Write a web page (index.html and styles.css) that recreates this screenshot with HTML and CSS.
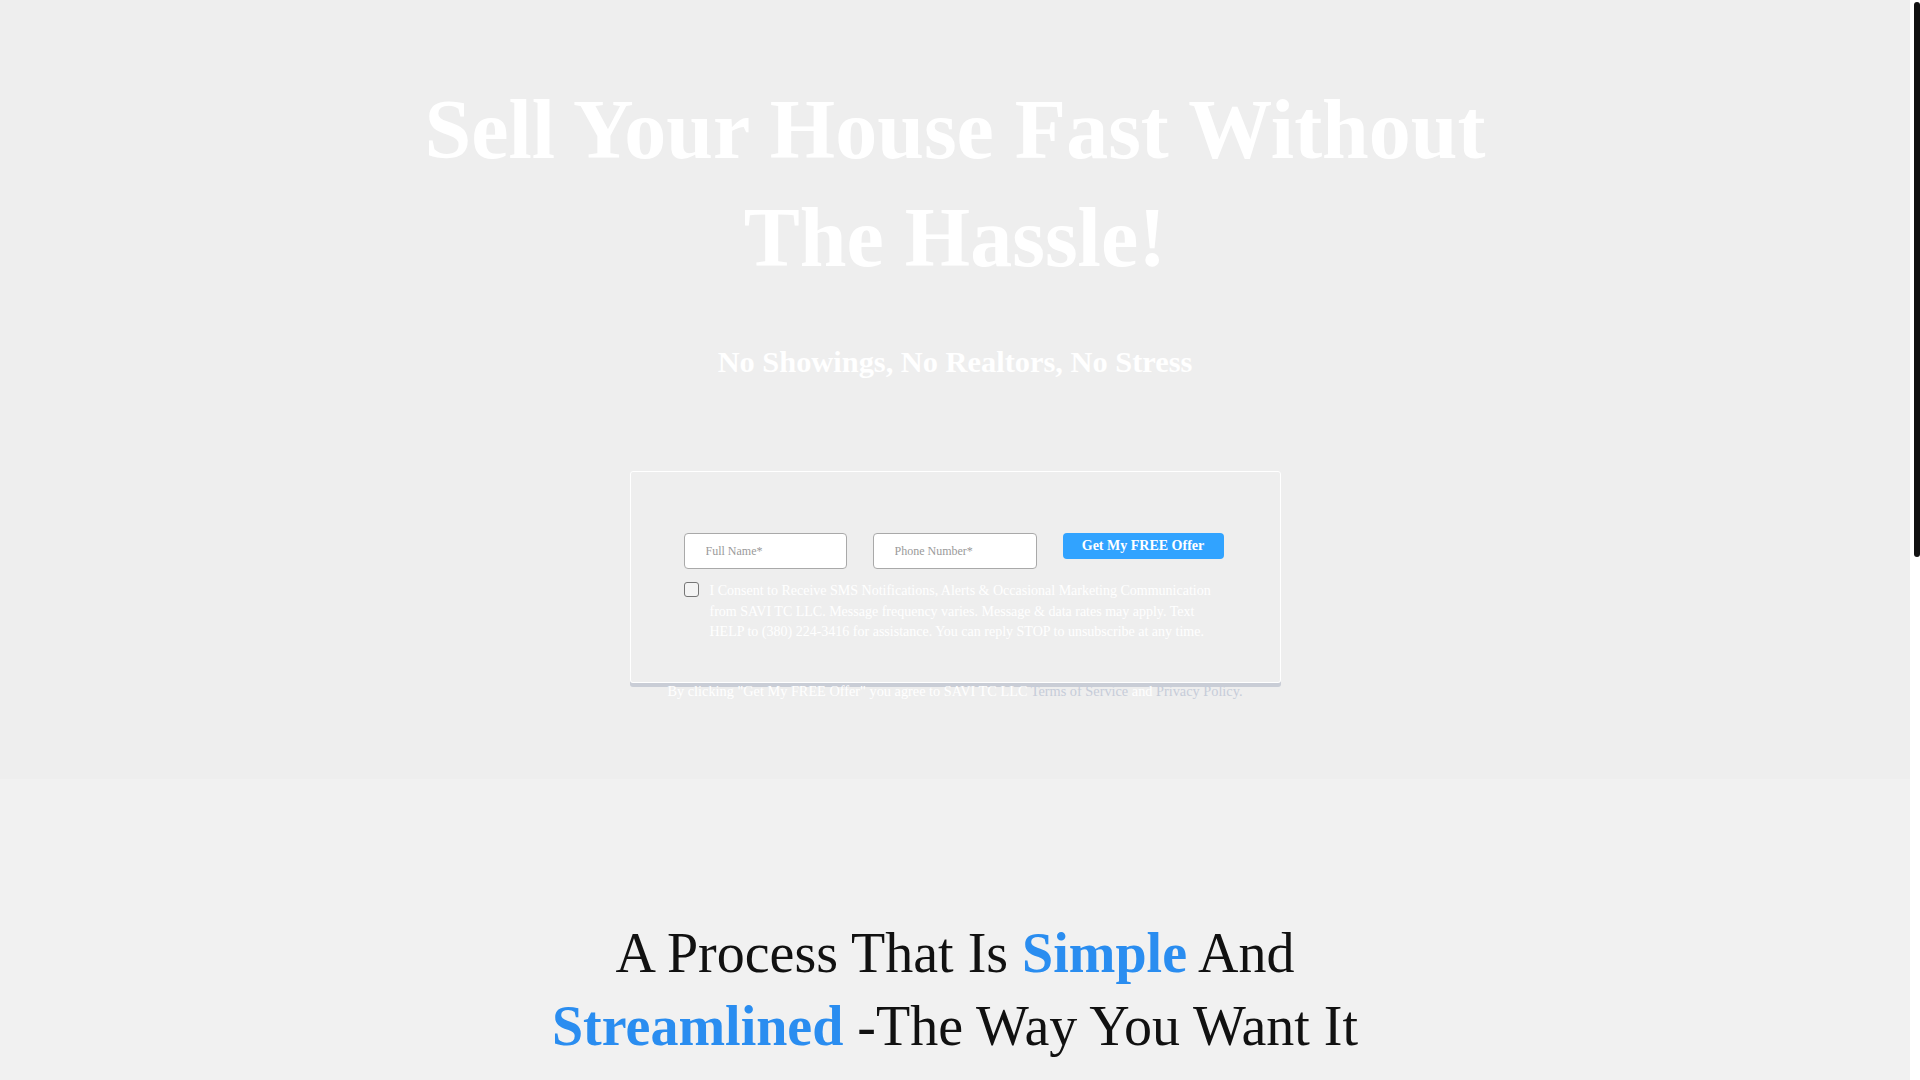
FILE: index.html
```html
<!DOCTYPE html>
<html lang="en">
<head>
<meta charset="utf-8">
<title>Sell Your House Fast</title>
<link rel="stylesheet" href="styles.css">
</head>
<body>
<section class="hero">
  <h1 class="hero-title">Sell Your House Fast Without The Hassle!</h1>
  <p class="hero-sub">No Showings, No Realtors, No Stress</p>
  <div class="form-wrap">
    <form class="lead-form">
      <div class="form-row">
        <input class="field field-name" type="text" placeholder="Full Name*">
        <input class="field field-phone" type="text" placeholder="Phone Number*">
        <button class="submit" type="button">Get My FREE Offer</button>
      </div>
      <label class="consent">
        <input class="consent-box" type="checkbox">
        <span class="consent-text">I Consent to Receive SMS Notifications, Alerts &amp; Occasional Marketing Communication from SAVI TC LLC. Message frequency varies. Message &amp; data rates may apply. Text HELP to (380) 224-3416 for assistance. You can reply STOP to unsubscribe at any time.</span>
      </label>
    </form>
    <p class="disclaimer">By clicking "Get My FREE Offer" you agree to SAVI TC LLC <a class="legal-link" href="#">Terms of Service</a> and <a class="legal-link" href="#">Privacy Policy.</a></p>
  </div>
</section>
<section class="process">
  <h2 class="process-title">A Process That Is <strong class="accent">Simple</strong> And <strong class="accent">Streamlined</strong> -The Way You Want It</h2>
</section>
<div class="scrollbar" aria-hidden="true"><div class="scrollbar-thumb"></div></div>
</body>
</html>
```
FILE: styles.css
```css
html {
  background: #ffffff;
}

body {
  margin: 0;
  padding-right: 10px;
  font-family: "Liberation Serif", "Times New Roman", serif;
  background: #f1f1f1;
}

.scrollbar {
  position: fixed;
  top: 0;
  right: 0;
  width: 10px;
  height: 100vh;
  background: #ffffff;
}

.scrollbar-thumb {
  margin: 2px 0 0 4px;
  width: 6px;
  height: 555px;
  border-radius: 3px;
  background: #111111;
}

.hero {
  background: #eeeeee;
  height: 779px;
  box-sizing: border-box;
  padding-top: 76px;
  text-align: center;
}

.hero-title {
  margin: 0 auto;
  max-width: 1120px;
  font-size: 84px;
  line-height: 108px;
  font-weight: bold;
  color: #ffffff;
}

.hero-sub {
  margin: 51px 0 0;
  font-size: 30.4px;
  line-height: 39px;
  font-weight: bold;
  color: #ffffff;
}

.form-wrap {
  width: 651px;
  margin: 89px auto 0;
}

.lead-form {
  height: 212px;
  box-sizing: border-box;
  border: 1px solid #ffffff;
  border-radius: 3px;
  box-shadow: 0 4px 0 #c9cdd6;
  padding: 61px 53px 0 53px;
  text-align: left;
}

.form-row {
  display: flex;
  align-items: flex-start;
  gap: 26px;
}

.field {
  box-sizing: border-box;
  height: 36px;
  border: 1px solid #a9a9a9;
  border-radius: 4px;
  background: #ffffff;
  padding: 0 0 0 21px;
  font-family: "Liberation Serif", "Times New Roman", serif;
  font-size: 12px;
  color: #333;
  outline: none;
}

.field::placeholder {
  color: #9a9a9a;
}

.field-name {
  width: 163px;
}

.field-phone {
  width: 164px;
}

.submit {
  width: 161px;
  height: 26px;
  border: none;
  border-radius: 4px;
  background: #31a3ff;
  color: #ffffff;
  font-family: "Liberation Serif", "Times New Roman", serif;
  font-size: 14px;
  font-weight: bold;
  padding: 0;
  cursor: pointer;
}

.consent {
  display: flex;
  align-items: flex-start;
  gap: 11px;
  margin-top: 12px;
}

.consent-box {
  appearance: none;
  -webkit-appearance: none;
  flex: 0 0 auto;
  width: 15px;
  height: 15px;
  margin: 1px 0 0 0;
  box-sizing: border-box;
  border: 1px solid #767676;
  border-radius: 3px;
  background: #f4f4f4;
}

.consent-text {
  font-size: 14px;
  line-height: 20.5px;
  color: #ffffff;
}

.disclaimer {
  margin: -2px -20px 0;
  text-align: center;
  font-size: 14.3px;
  line-height: 20px;
  color: #ffffff;
}

.legal-link {
  color: #c6ccd9;
  text-decoration: none;
}

.process {
  min-height: 1315px;
  box-sizing: border-box;
  padding-top: 138px;
  background: #f1f1f1;
  text-align: center;
}

.process-title {
  margin: 0 auto;
  max-width: 900px;
  font-size: 56px;
  line-height: 73px;
  font-weight: normal;
  color: #111111;
}

.accent {
  color: #2a8df0;
  font-weight: bold;
}
```
